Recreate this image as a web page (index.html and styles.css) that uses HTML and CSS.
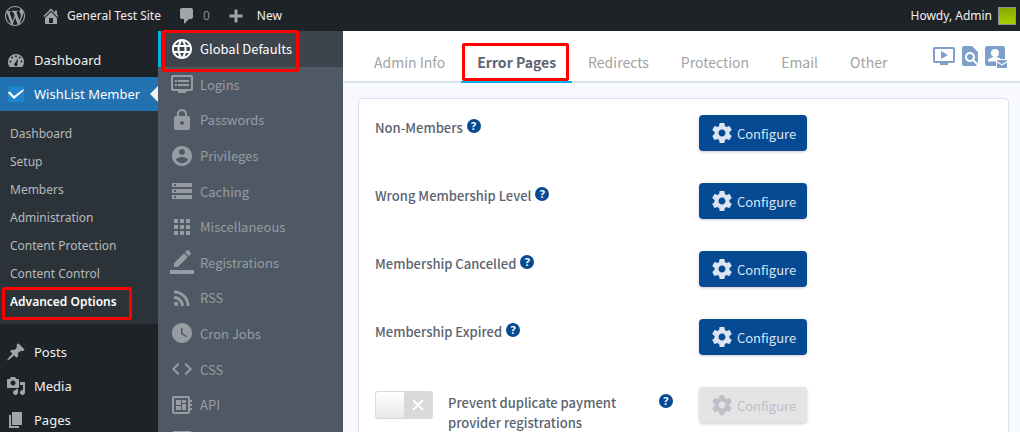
FILE: index.html
```html
<!DOCTYPE html>
<html lang="en">

<head>
    <meta charset="UTF-8">
    <meta name="viewport" content="width=device-width, initial-scale=1.0">
    <title>WishList Member - Advanced Options</title>
    <link rel="stylesheet" href="styles.css">
</head>

<body>
    <header class="adminbar">
        <a href="#" class="wp-logo" aria-label="About WordPress"><svg viewBox="0 0 20 20"><path d="M20 10c0-5.51-4.49-10-10-10C4.48 0 0 4.49 0 10c0 5.52 4.48 10 10 10 5.51 0 10-4.48 10-10zM7.78 15.37L4.37 6.22c.55-.02 1.17-.08 1.17-.08.5-.06.44-1.13-.06-1.11 0 0-1.45.11-2.37.11-.18 0-.37 0-.58-.01C4.12 2.69 6.87 1.11 10 1.11c2.33 0 4.45.87 6.05 2.34-.68-.11-1.65.39-1.65 1.58 0 .74.45 1.36.9 2.1.35.61.55 1.36.55 2.46 0 1.49-1.4 5-1.4 5l-3.03-8.37c.54-.02.82-.17.82-.17.5-.05.44-1.25-.06-1.22 0 0-1.44.12-2.38.12-.87 0-2.33-.12-2.33-.12-.5-.03-.56 1.2-.06 1.22l.92.08 1.26 3.41zM17.41 10c.24-.64.74-1.87.43-4.25.7 1.29 1.05 2.71 1.05 4.25 0 3.29-1.73 6.24-4.4 7.78.97-2.59 1.94-5.2 2.92-7.78zM6.1 18.09C3.12 16.65 1.11 13.53 1.11 10c0-1.3.23-2.48.72-3.59C3.25 10.3 4.67 14.2 6.1 18.09zm4.03-6.63l2.58 6.98c-.86.29-1.76.45-2.71.45-.79 0-1.57-.11-2.29-.33.81-2.38 1.62-4.74 2.42-7.1z"/></svg></a>
        <a href="#"><svg viewBox="0 0 20 20"><path d="M16 8.5l1.53 1.53-1.06 1.06L10 4.6l-6.47 6.49-1.06-1.06L10 2.5l4 4v-2h2v4zm-6-2.46l6 5.99V18H4v-5.97zM12 17v-5H8v5h4z"/></svg>General Test Site</a>
        <a href="#" class="comments"><svg viewBox="0 0 20 20"><path d="M5 2h9c1.1 0 2 .9 2 2v7c0 1.1-.9 2-2 2h-2l-5 5v-5H5c-1.1 0-2-.9-2-2V4c0-1.1.9-2 2-2z"/></svg>0</a>
        <a href="#" class="new"><svg viewBox="0 0 20 20"><path d="M8.5 3.5h3v5h5v3h-5v5h-3v-5h-5v-3h5z"/></svg>New</a>
        <a href="#" class="account">Howdy, Admin<span class="avatar"></span></a>
    </header>

    <div class="wrap">
        <nav class="menu">
            <a href="#" class="menu-item"><svg viewBox="0 0 20 20"><path fill-rule="evenodd" d="M3.8 17h12.4c1.1-1.4 1.8-3.1 1.8-5a8 8 0 0 0-16 0c0 1.900.7 3.600 1.800 5zM10 5.200a1 1 0 1 1 0 2 1 1 0 0 1 0-2zM6.200 6.600a1 1 0 1 1 0 2 1 1 0 0 1 0-2zM13.800 6.600a1 1 0 1 1 0 2 1 1 0 0 1 0-2zM4.500 10.500a1 1 0 1 1 0 2 1 1 0 0 1 0-2zM15.500 10.500a1 1 0 1 1 0 2 1 1 0 0 1 0-2zM12 8.300l-.6 5.700a1.700 1.700 0 1 1-2.400-.9z"/></svg>Dashboard</a>
            <a href="#" class="menu-item current"><svg viewBox="0 0 20 20"><path fill="#1e84cc" d="M2 2h16v16H2z"/><path fill="#fff" d="M1.500 8.500l2.500-1 4 4.500 9.500-7v2L8 15z"/></svg>WishList Member</a>
            <div class="submenu">
                <a href="#">Dashboard</a>
                <a href="#">Setup</a>
                <a href="#">Members</a>
                <a href="#">Administration</a>
                <a href="#">Content Protection</a>
                <a href="#">Content Control</a>
                <a href="#" class="active mark">Advanced Options</a>
            </div>
            <a href="#" class="menu-item"><svg viewBox="0 0 20 20"><path d="M10.440 3.020l1.820-1.820 6.360 6.350-1.830 1.820c-1.050-.68-2.480-.57-3.410.36l-.75.75c-.92.93-1.040 2.350-.35 3.410l-1.830 1.820-2.410-2.410-2.800 2.790c-.42.42-3.380 2.710-3.800 2.290s1.860-3.390 2.280-3.810l2.790-2.790L4.100 9.360l1.830-1.820c1.050.69 2.480.57 3.400-.36l.75-.75c.93-.92 1.050-2.350.36-3.410z"/></svg>Posts</a>
            <a href="#" class="menu-item"><svg viewBox="0 0 20 20"><path d="M13 11V4c0-.55-.45-1-1-1h-1.670L9 1H5L3.670 3H2c-.55 0-1 .45-1 1v7c0 .55.45 1 1 1h10c.55 0 1-.45 1-1zM7 4.500c1.380 0 2.500 1.120 2.500 2.500S8.380 9.500 7 9.500 4.500 8.380 4.500 7 5.620 4.500 7 4.500zM14 6h5v10.500c0 1.380-1.120 2.500-2.500 2.500S14 17.880 14 16.500s1.120-2.500 2.500-2.500c.17 0 .34.02.5.05V9h-3V6zm-4 8.050V13h2v3.500c0 1.380-1.120 2.500-2.500 2.500S7 17.880 7 16.500 8.120 14 9.500 14c.17 0 .34.02.5.05z"/></svg>Media</a>
            <a href="#" class="menu-item"><svg viewBox="0 0 20 20"><path d="M6 15V2h10v13H6zm-1 1h8v2H3V5h2v11z"/></svg>Pages</a>
        </nav>

        <nav class="side">
            <a href="#" class="active mark"><svg viewBox="0 0 24 24"><path d="M11.990 2C6.470 2 2 6.480 2 12s4.470 10 9.990 10C17.520 22 22 17.520 22 12S17.520 2 11.990 2zm6.930 6h-2.950c-.32-1.250-.78-2.450-1.380-3.560 1.840.63 3.370 1.910 4.330 3.560zM12 4.040c.83 1.200 1.480 2.530 1.910 3.960h-3.820c.43-1.430 1.080-2.760 1.910-3.960zM4.260 14C4.100 13.360 4 12.690 4 12s.1-1.360.26-2h3.380c-.08.66-.14 1.320-.14 2s.06 1.340.14 2H4.260zm.82 2h2.950c.32 1.250.78 2.450 1.380 3.560-1.840-.63-3.370-1.900-4.330-3.560zm2.950-8H5.080c.96-1.660 2.490-2.930 4.330-3.560C8.810 5.550 8.350 6.750 8.030 8zM12 19.960c-.83-1.200-1.480-2.530-1.910-3.960h3.820c-.43 1.430-1.080 2.760-1.910 3.960zM14.340 14H9.660c-.09-.66-.16-1.320-.16-2s.07-1.350.16-2h4.680c.09.65.16 1.320.16 2s-.07 1.340-.16 2zm.25 5.560c.6-1.110 1.060-2.310 1.380-3.560h2.950c-.96 1.650-2.490 2.930-4.330 3.560zM16.360 14c.08-.66.14-1.320.14-2s-.06-1.340-.14-2h3.380c.16.64.26 1.310.26 2s-.1 1.360-.26 2h-3.380z"/></svg>Global Defaults</a>
            <a href="#"><svg viewBox="0 0 24 24"><path d="M21 3H3c-1.100 0-2 .9-2 2v12c0 1.100.9 2 2 2h5v2h8v-2h5c1.100 0 1.990-.9 1.990-2L23 5c0-1.100-.9-2-2-2zm0 14H3V5h18v12zm-2-9H8v2h11V8zm0 4H8v2h11v-2zM7 8H5v2h2V8zm0 4H5v2h2v-2z"/></svg>Logins</a>
            <a href="#"><svg viewBox="0 0 24 24"><path d="M18 8h-1V6c0-2.760-2.240-5-5-5S7 3.240 7 6v2H6c-1.100 0-2 .9-2 2v10c0 1.100.9 2 2 2h12c1.100 0 2-.9 2-2V10c0-1.100-.9-2-2-2zm-6 9c-1.100 0-2-.9-2-2s.9-2 2-2 2 .9 2 2-.9 2-2 2zm3.100-9H8.900V6c0-1.710 1.390-3.100 3.100-3.100 1.710 0 3.100 1.390 3.100 3.100v2z"/></svg>Passwords</a>
            <a href="#"><svg viewBox="0 0 24 24"><path d="M12 2C6.480 2 2 6.480 2 12s4.480 10 10 10 10-4.480 10-10S17.520 2 12 2zm0 3c1.660 0 3 1.340 3 3s-1.340 3-3 3-3-1.340-3-3 1.340-3 3-3zm0 14.200c-2.500 0-4.710-1.280-6-3.220.03-1.990 4-3.080 6-3.080 1.990 0 5.970 1.090 6 3.080-1.290 1.940-3.500 3.220-6 3.220z"/></svg>Privileges</a>
            <a href="#"><svg viewBox="0 0 24 24"><path d="M2 20h20v-4H2v4zm2-3h2v2H4v-2zM2 4v4h20V4H2zm4 3H4V5h2v2zm-4 7h20v-4H2v4zm2-3h2v2H4v-2z"/></svg>Caching</a>
            <a href="#"><svg viewBox="0 0 24 24"><path d="M4 8h4V4H4v4zm6 12h4v-4h-4v4zm-6 0h4v-4H4v4zm0-6h4v-4H4v4zm6 0h4v-4h-4v4zm6-10v4h4V4h-4zm-6 4h4V4h-4v4zm6 6h4v-4h-4v4zm0 6h4v-4h-4v4z"/></svg>Miscellaneous</a>
            <a href="#"><svg viewBox="0 0 24 24"><path d="M17.750 7L14 3.250l-10 10V17h3.750l10-10zm2.960-2.960c.39-.39.39-1.020 0-1.410L18.370.29c-.39-.39-1.020-.39-1.410 0L15 2.250 18.750 6l1.960-1.960zM0 20h24v4H0z"/></svg>Registrations</a>
            <a href="#"><svg viewBox="0 0 24 24"><circle cx="6.180" cy="17.820" r="2.180"/><path d="M4 4.440v2.830c7.030 0 12.730 5.700 12.730 12.730h2.830c0-8.590-6.970-15.560-15.560-15.560zm0 5.660v2.830c3.900 0 7.070 3.170 7.070 7.070h2.830c0-5.470-4.430-9.900-9.900-9.900z"/></svg>RSS</a>
            <a href="#"><svg viewBox="0 0 24 24"><path d="M12 2C6.500 2 2 6.500 2 12s4.500 10 10 10 10-4.500 10-10S17.500 2 12 2zm4.200 14.200L11 13V7h1.500v5.200l4.500 2.700-.8 1.300z"/></svg>Cron Jobs</a>
            <a href="#"><svg viewBox="0 0 24 24"><path d="M9.400 16.600L4.800 12l4.600-4.600L8 6l-6 6 6 6 1.400-1.400zm5.200 0l4.600-4.600-4.600-4.600L16 6l6 6-6 6-1.400-1.400z"/></svg>CSS</a>
            <a href="#"><svg viewBox="0 0 24 24"><path d="M22 9V7h-2V5c0-1.100-.9-2-2-2H4c-1.100 0-2 .9-2 2v14c0 1.100.9 2 2 2h14c1.100 0 2-.9 2-2v-2h2v-2h-2v-2h2v-2h-2V9h2zm-4 10H4V5h14v14zM6 13h5v4H6zm6-6h4v3h-4zM6 7h5v5H6zm6 4h4v6h-4z"/></svg>API</a>
            <a href="#" aria-label="Backup"><svg viewBox="0 0 24 24"><path d="M4 3h16c1.100 0 2 .9 2 2v14c0 1.100-.9 2-2 2H4c-1.100 0-2-.9-2-2V5c0-1.100.9-2 2-2z"/></svg></a>
        </nav>

        <main>
            <div class="topbar">
                <nav class="tabs">
                    <a href="#">Admin Info</a>
                    <a href="#" class="active mark">Error Pages</a>
                    <a href="#">Redirects</a>
                    <a href="#">Protection</a>
                    <a href="#">Email</a>
                    <a href="#">Other</a>
                </nav>
                <div class="tools">
                    <a href="#" aria-label="Video"><svg viewBox="0 0 24 24"><path d="M21 3H3c-1.110 0-2 .89-2 2v12c0 1.100.89 2 2 2h5v2h8v-2h5c1.100 0 1.990-.9 1.990-2L23 5c0-1.110-.9-2-2-2zm0 14H3V5h18v12zm-5-6l-7 4V7z"/></svg></a>
                    <a href="#" aria-label="Documentation"><svg viewBox="0 0 24 24"><path d="M20 19.590V8l-6-6H6c-1.100 0-1.990.9-1.990 2L4 20c0 1.100.89 2 1.990 2H18c.45 0 .85-.15 1.190-.4l-4.430-4.430c-.8.52-1.740.83-2.760.83-2.760 0-5-2.240-5-5s2.240-5 5-5 5 2.240 5 5c0 1.020-.31 1.960-.83 2.750L20 19.590zM9 13c0 1.660 1.340 3 3 3s3-1.340 3-3-1.340-3-3-3-3 1.340-3 3z"/></svg></a>
                    <a href="#" aria-label="Support"><svg viewBox="0 0 24 24"><path fill-rule="evenodd" d="M3 2h16a2 2 0 0 1 2 2v11h-4c-1-1.200-4-2-6-2-2.500 0-7 1.200-7 3.500v1h8v4.500H3a2 2 0 0 1-2-2V4c0-1.100.9-2 2-2zm8 3a4 4 0 1 0 0 8 4 4 0 0 0 0-8z"/><path d="M14 16h8c.6 0 1 .4 1 1l-5 3.200-5-3.200c0-.6.4-1 1-1zM13 18.400l5 3.200 5-3.200V23c0 .6-.4 1-1 1h-8c-.6 0-1-.4-1-1z"/></svg></a>
                </div>
            </div>

            <section class="card">
                <div class="row">
                    <div class="name">Non-Members <button class="help" aria-label="Help">?</button></div>
                    <button class="btn"><svg viewBox="0 0 24 24"><use href="#gear"/></svg>Configure</button>
                </div>
                <div class="row">
                    <div class="name">Wrong Membership Level <button class="help" aria-label="Help">?</button></div>
                    <button class="btn"><svg viewBox="0 0 24 24"><use href="#gear"/></svg>Configure</button>
                </div>
                <div class="row">
                    <div class="name">Membership Cancelled <button class="help" aria-label="Help">?</button></div>
                    <button class="btn"><svg viewBox="0 0 24 24"><use href="#gear"/></svg>Configure</button>
                </div>
                <div class="row">
                    <div class="name">Membership Expired <button class="help" aria-label="Help">?</button></div>
                    <button class="btn"><svg viewBox="0 0 24 24"><use href="#gear"/></svg>Configure</button>
                </div>
                <div class="row">
                    <div class="name option">
                        <span class="switch">
                            <input type="checkbox" id="duplicate">
                            <svg viewBox="0 0 12 12"><path d="M1 1l10 10M11 1L1 11"/></svg>
                        </span>
                        <label for="duplicate">Prevent duplicate payment provider registrations</label>
                        <button class="help" aria-label="Help">?</button>
                    </div>
                    <button class="btn" disabled><svg viewBox="0 0 24 24"><use href="#gear"/></svg>Configure</button>
                </div>
            </section>
        </main>
    </div>

    <svg class="defs">
        <symbol id="gear" viewBox="0 0 24 24"><path d="M19.430 12.980c.04-.32.07-.64.07-.98s-.03-.66-.07-.98l2.110-1.650c.19-.15.24-.42.12-.64l-2-3.460c-.12-.22-.39-.3-.61-.22l-2.490 1c-.52-.4-1.080-.73-1.690-.98l-.38-2.650C14.460 2.180 14.250 2 14 2h-4c-.25 0-.46.18-.49.42l-.38 2.650c-.61.25-1.170.59-1.690.98l-2.490-1c-.23-.09-.49 0-.61.22l-2 3.460c-.13.22-.07.49.12.64l2.110 1.650c-.04.32-.07.65-.07.98s.03.66.07.98l-2.110 1.650c-.19.15-.24.42-.12.64l2 3.460c.12.22.39.3.61.22l2.490-1c.52.4 1.080.73 1.690.98l.38 2.650c.03.24.24.42.49.42h4c.25 0 .46-.18.49-.42l.38-2.650c.61-.25 1.170-.59 1.690-.98l2.490 1c.23.09.49 0 .61-.22l2-3.460c.12-.22.07-.49-.12-.64l-2.110-1.650zM12 15.500c-1.930 0-3.500-1.570-3.500-3.500s1.570-3.500 3.500-3.500 3.500 1.570 3.500 3.500-1.570 3.500-3.500 3.500z"/></symbol>
    </svg>
</body>

</html>
```

FILE: styles.css
```css
* {
    box-sizing: border-box;
}

body {
    margin: 0;
    height: 100vh;
    display: flex;
    flex-direction: column;
    overflow: hidden;
    background: #f7f9fc;
    font-family: "Noto Sans CJK SC", "Open Sans", sans-serif;
    font-size: 13px;
}

a {
    color: inherit;
    text-decoration: none;
}

svg {
    flex: none;
    fill: currentColor;
}

.defs {
    display: none;
}

/* top admin bar */
.adminbar {
    display: flex;
    align-items: center;
    flex: none;
    height: 31px;
    padding: 0 4px 0 5px;
    gap: 16px;
    background: #1d2327;
    color: #f0f0f1;
    font-family: "Noto Sans", sans-serif;
    font-size: 12px;
}

.adminbar a {
    display: flex;
    align-items: center;
    gap: 6px;
    line-height: 32px;
}

.adminbar svg {
    width: 20px;
    height: 20px;
    color: #a0a5aa;
}

.adminbar .comments {
    color: #8c8f94;
}

.adminbar .new {
    gap: 11px;
}

.adminbar .account {
    margin-left: auto;
}

.avatar {
    width: 18px;
    height: 18px;
    border: 1px solid #8c8f94;
    background: linear-gradient(#86a800, #a8d000);
}

.wrap {
    display: flex;
    flex: 1;
    min-height: 0;
}

/* red outlines round the highlighted links */
.mark {
    position: relative;
}

.mark::before {
    content: "";
    position: absolute;
    z-index: 2;
    border: 3px solid #f00;
    border-radius: 2px;
}

/* wordpress menu */
.menu {
    flex: none;
    width: 158px;
    padding-top: 12px;
    background: #1d2327;
    color: #f0f0f1;
    font-family: "Noto Sans", sans-serif;
    overflow: hidden;
}

.menu-item {
    position: relative;
    display: flex;
    align-items: center;
    gap: 8px;
    height: 34px;
    padding-left: 6px;
}

.menu-item svg {
    width: 20px;
    height: 20px;
    color: #a0a5aa;
}

.menu-item.current {
    background: #2271b1;
    color: #fff;
}

.menu-item.current::after {
    content: "";
    position: absolute;
    top: 9px;
    right: 0;
    border: 8px solid transparent;
    border-left: 0;
    border-right-color: #f0f0f1;
}

.submenu {
    margin-bottom: 11px;
    padding: 9px 0 8px;
    background: #2c3338;
    color: #b5babf;
    font-size: 12px;
}

.submenu a {
    display: block;
    padding-left: 10px;
    line-height: 28px;
}

.submenu .active {
    color: #fff;
    font-weight: 600;
}

.submenu .mark::before {
    top: -1px;
    bottom: -4px;
    left: 2px;
    right: 26px;
}

/* plugin menu */
.side {
    display: grid;
    grid-auto-rows: 1fr;
    flex: none;
    width: 185px;
    height: 427px;
    background: #4f5965;
    color: #979ca3;
}

.side a {
    display: flex;
    align-items: center;
    gap: 6px;
    padding-left: 12px;
}

.side svg {
    width: 24px;
    height: 24px;
}

.side .active {
    padding-left: 9px;
    border-left: 3px solid #00b2e8;
    background: #3e444c;
    color: #fff;
}

.side .mark::before {
    top: -1px;
    bottom: -5px;
    left: 1px;
    right: 44px;
}

/* content */
main {
    flex: 1;
    min-width: 0;
}

.topbar {
    display: flex;
    justify-content: space-between;
    height: 52px;
    padding: 0 12px 0 15px;
    background: #fff;
    border-bottom: 2px solid #dbe2ef;
}

.tabs {
    display: flex;
    color: #a3a3a3;
    font-size: 14px;
}

.tabs a {
    height: 52px;
    padding: 0 16px;
    line-height: 62px;
}

.tabs .active {
    border-bottom: 2px solid #00b2e8;
    color: #5b6370;
    font-weight: bold;
}

.tabs .mark::before {
    top: 12px;
    bottom: 0;
    left: 1px;
    right: 3px;
}

.tools {
    display: flex;
    align-items: center;
    gap: 2px;
    color: #7f9fcb;
}

.tools svg {
    display: block;
    width: 24px;
    height: 24px;
}

.card {
    margin: 15px 11px 0 15px;
    padding: 16px;
    background: #fff;
    border: 1px solid #dbe2ef;
    border-radius: 4px;
}

.row {
    display: grid;
    grid-template-columns: 21fr 19fr;
    align-items: start;
    justify-items: start;
    min-height: 68px;
}

.name {
    display: flex;
    gap: 4px;
    padding-top: 3px;
    color: #5b6370;
    font-weight: 500;
    line-height: 20px;
}

.help {
    flex: none;
    width: 14px;
    height: 14px;
    margin-top: 1px;
    padding: 0;
    border: 0;
    border-radius: 50%;
    background: #064a93;
    color: #fff;
    font: bold 11px/14px "Open Sans", sans-serif;
}

.btn {
    display: flex;
    align-items: center;
    gap: 3px;
    height: 36px;
    padding: 0 11px;
    border: 0;
    border-radius: 4px;
    background: #064a93;
    box-shadow: 0 1px 3px rgba(0, 0, 0, 0.2);
    color: #dbe4f0;
    font-family: inherit;
    font-size: 13px;
}

.btn svg {
    width: 24px;
    height: 24px;
}

.btn:disabled {
    background: #e4e4e4;
    color: #bcc0c7;
}

.option {
    justify-self: stretch;
    align-items: start;
    gap: 15px;
    padding-top: 4px;
}

.option label {
    flex: 1;
    padding-top: 2px;
}

.option .help {
    margin: 3px 26px 0 0;
}

.switch {
    display: grid;
    flex: none;
    align-items: center;
}

.switch input,
.switch svg {
    grid-area: 1 / 1;
}

.switch input {
    appearance: none;
    width: 58px;
    height: 28px;
    margin: 0;
    border: 1px solid #d9d9d9;
    border-radius: 3px;
    background: linear-gradient(#fff, #e8e8e8) left / 28px 100% no-repeat #d9d9d9;
}

.switch svg {
    justify-self: end;
    width: 12px;
    height: 12px;
    margin-right: 9px;
    stroke: #fff;
    stroke-width: 2;
    pointer-events: none;
}
```
